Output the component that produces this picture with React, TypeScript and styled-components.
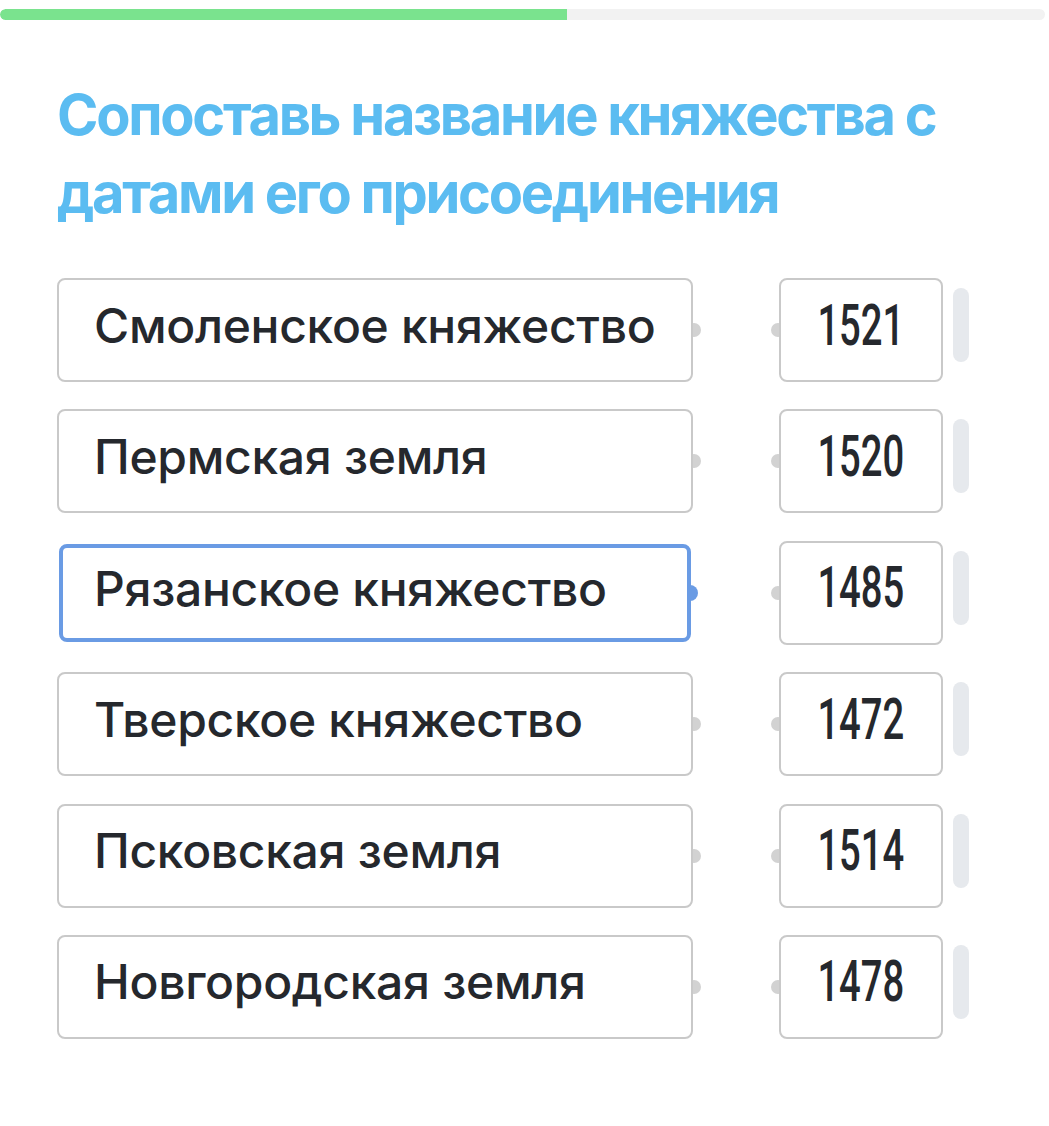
import styled, { createGlobalStyle } from "styled-components";

const GlobalStyle = createGlobalStyle`
    body {
        margin: 0;
        background: #ffffff;
        font-family: Inter, "Noto Sans", sans-serif;
    }
`;

const Page = styled.div`
    width: 1049px;
    min-height: 1126px;
    padding-top: 9px;
    box-sizing: border-box;
`;

const Progress = styled.div`
    height: 11px;
    margin-right: 4px;
    background: #f2f2f2;
    border-radius: 6px;
    overflow: hidden;
`;

const ProgressFill = styled.div`
    height: 100%;
    background: #7ae38e;
    border-radius: 6px 0 0 6px;
`;

const Content = styled.div`
    padding: 0 57px;
`;

const Title = styled.h1`
    margin: 56px 0 0;
    font-size: 56px;
    line-height: 78px;
    font-weight: 700;
    letter-spacing: -2.3px;
    color: #5bbcf1;
`;

const Rows = styled.div`
    margin-top: 46px;
    display: flex;
    flex-direction: column;
    gap: 27.4px;
`;

const Row = styled.div`
    display: grid;
    grid-template-columns: 636px 164px 16px;
    column-gap: 86px;
    align-items: start;

    & > :last-child {
        margin-left: -76px;
    }
`;

const Box = styled.div`
    position: relative;
    height: 104px;
    box-sizing: border-box;
    border: 2px solid #c9c9c9;
    border-radius: 8px;
    background: #fff;
    display: flex;
    align-items: center;
    color: #25282d;
    padding-bottom: 10px;
`;

const NameBox = styled(Box)<{ $active?: boolean }>`
    padding-left: 35px;
    font-size: 48px;
    font-weight: 500;
    letter-spacing: -0.3px;
    ${(p) =>
        p.$active
            ? `
        margin: 3px 2px 0;
        height: 98px;
        padding-left: 31px;
        padding-bottom: 8px;
        border: 4px solid #6a9be4;
    `
            : ""}

    &::before {
        content: "";
        position: absolute;
        right: ${(p) => (p.$active ? "-11px" : "-10px")};
        top: 50%;
        width: ${(p) => (p.$active ? "16px" : "14px")};
        height: ${(p) => (p.$active ? "16px" : "14px")};
        transform: translateY(-50%);
        border-radius: 50%;
        background: ${(p) => (p.$active ? "#6a9be4" : "#d2d2d2")};
        z-index: -1;
    }
`;

const YearBox = styled(Box)`
    justify-content: center;

    &::before {
        content: "";
        position: absolute;
        left: -10px;
        top: 50%;
        width: 14px;
        height: 14px;
        transform: translateY(-50%);
        border-radius: 50%;
        background: #d2d2d2;
        z-index: -1;
    }
`;

const Year = styled.span`
    display: inline-block;
    font-family: Roboto, "Liberation Sans", sans-serif;
    font-size: 57px;
    font-weight: 500;
    transform: scaleX(0.67);
`;

const Handle = styled.div`
    margin-top: 10px;
    width: 16px;
    height: 74px;
    border-radius: 8px;
    background: #e6e9ed;
`;

const pairs = [
    { name: "Смоленское княжество", year: "1521" },
    { name: "Пермская земля", year: "1520" },
    { name: "Рязанское княжество", year: "1485", active: true },
    { name: "Тверское княжество", year: "1472" },
    { name: "Псковская земля", year: "1514" },
    { name: "Новгородская земля", year: "1478" },
];

export default function App() {
    return (
        <Page>
            <GlobalStyle />
            <Progress>
                <ProgressFill style={{ width: "567px" }} />
            </Progress>
            <Content>
                <Title>
                    Сопоставь название княжества с<br />
                    датами его присоединения
                </Title>
                <Rows>
                    {pairs.map((p) => (
                        <Row key={p.name}>
                            <NameBox $active={p.active}>{p.name}</NameBox>
                            <YearBox>
                                <Year>{p.year}</Year>
                            </YearBox>
                            <Handle />
                        </Row>
                    ))}
                </Rows>
            </Content>
        </Page>
    );
}
